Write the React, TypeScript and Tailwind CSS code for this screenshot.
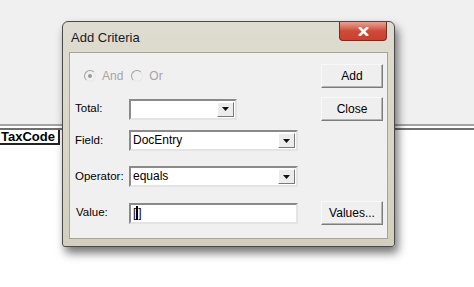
import React from 'react'

const font = { fontFamily: '"Liberation Sans", Arial, sans-serif' }

function DropArrow() {
  return (
    <div className="w-[17px] h-full bg-[#ececec] border border-t-white border-l-white border-b-[#7a7a7a] border-r-[#7a7a7a] flex items-center justify-center">
      <svg width="7" height="4" viewBox="0 0 7 4">
        <path d="M0 0 L7 0 L3.5 4 Z" fill="#111" />
      </svg>
    </div>
  )
}

function Combo({ value, width }: { value: string; width: string }) {
  return (
    <div
      className={`${width} h-[21px] bg-white border-2 border-t-[#8a8a8a] border-l-[#8a8a8a] border-b-[#e4e4e4] border-r-[#e4e4e4] flex items-stretch`}
    >
      <div className="flex-1 pl-[2px] text-[12px] leading-[17px] text-black">{value}</div>
      <div className="p-px">
        <DropArrow />
      </div>
    </div>
  )
}

function WinButton({ label }: { label: string }) {
  return (
    <button className="w-[62px] h-[24px] bg-[#efefef] border border-t-[#f8f8f8] border-l-[#f8f8f8] border-b-[#7c7c7c] border-r-[#7c7c7c] shadow-[inset_-1px_-1px_0_#b4b4b4] text-[12px] text-black">
      {label}
    </button>
  )
}

function Radio({ checked }: { checked?: boolean }) {
  return (
    <span className="w-[12px] h-[12px] rounded-full border border-t-[#a0a0a0] border-l-[#a0a0a0] border-b-[#e8e8e8] border-r-[#e8e8e8] bg-[#f0f0f0] flex items-center justify-center">
      {checked && <span className="w-[4px] h-[4px] rounded-full bg-[#9a9a9a]" />}
    </span>
  )
}

export default function App() {
  return (
    <div className="relative w-[474px] h-[287px] overflow-hidden bg-white" style={font}>
      <div className="h-[124px] bg-[#f0f0f0]" />
      <div className="h-[2px] bg-[#a4a4a4]" />
      <div className="h-[2px] bg-white" />
      <div className="h-[2px] bg-[#6e6e6e]" />
      <div className="flex">
        <div className="w-[60px] h-[15px] border-b-2 border-r-2 border-[#222] text-[13px] font-bold leading-[14px] pl-[1px] text-black">
          TaxCode
        </div>
      </div>

      {/* dialog window */}
      <div className="absolute left-[62px] top-[21px] w-[333px] h-[226px] rounded-t-[6px] rounded-b-[3px] border border-[#4a4a4a] bg-gradient-to-b from-[#dedcd0] via-[#d9d6c6] to-[#d2cfbd] shadow-[3px_6px_10px_rgba(0,0,0,0.55)] flex flex-col">
        <div className="h-[30px] flex items-start relative">
          <span className="pl-[8px] pt-[6px] text-[13px] text-[#1a1a1a]">Add Criteria</span>
          <div className="absolute left-[276px] top-0 w-[48px] h-[19px] rounded-b-[4px] border border-t-0 border-[#7a2a20] bg-gradient-to-b from-[#e8a193] via-[#cf4a36] to-[#c8412f] flex items-center justify-center">
            <svg width="11" height="9" viewBox="0 0 11 9">
              <path d="M2 1 L9 8 M9 1 L2 8" stroke="#fff" strokeWidth="2.6" strokeLinecap="square" />
            </svg>
          </div>
        </div>
        <div className="mx-[6px] mb-[7px] flex-1 bg-[#f0f0f0] border border-[#a6a39a] flex flex-col pl-[5px] pr-[4px] text-[12px] text-black">
          <div className="mt-[11px] h-[24px] flex items-center">
            <div className="flex items-center pl-[9px] gap-[6px] text-[#a5a5a5]">
              <Radio checked />
              <span className="mr-[2px]">And</span>
              <Radio />
              <span>Or</span>
            </div>
            <div className="ml-auto">
              <WinButton label="Add" />
            </div>
          </div>
          <div className="mt-[9px] h-[24px] flex items-center">
            <span className="w-[54px] text-[11.5px]">Total:</span>
            <Combo value="" width="w-[108px]" />
            <div className="ml-auto">
              <WinButton label="Close" />
            </div>
          </div>
          <div className="mt-[9px] h-[21px] flex items-center">
            <span className="w-[54px] text-[11.5px]">Field:</span>
            <Combo value="DocEntry" width="w-[169px]" />
          </div>
          <div className="mt-[15px] h-[21px] flex items-center">
            <span className="w-[54px] text-[11.5px]">Operator:</span>
            <Combo value="equals" width="w-[169px]" />
          </div>
          <div className="mt-[14px] h-[24px] flex items-center">
            <span className="w-[54px] pl-[1px] text-[11.5px]">Value:</span>
            <div className="w-[169px] h-[21px] bg-white border-2 border-t-[#8a8a8a] border-l-[#8a8a8a] border-b-[#e4e4e4] border-r-[#e4e4e4] pl-[2px] leading-[17px]">
              [<span className="border-l-2 border-black" />]
            </div>
            <div className="ml-auto">
              <WinButton label="Values..." />
            </div>
          </div>
        </div>
      </div>
    </div>
  )
}
